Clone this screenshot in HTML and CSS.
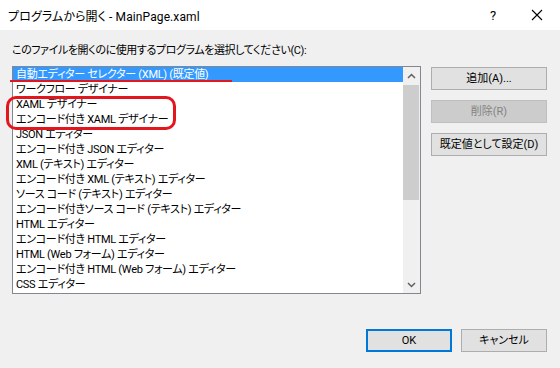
FILE: index.html
```html
<!DOCTYPE html>
<html lang="ja">
<head>
  <meta charset="UTF-8">
  <title>プログラムから開く</title>
  <link rel="stylesheet" href="styles.css">
</head>
<body>

  <div class="dialog">

    <!-- タイトルバー -->
    <div class="title-bar">
      <div class="title-text">プログラムから開く - MainPage.xaml</div>
      <div class="title-help">?</div>
      <div class="title-close">
        <svg width="12" height="12" viewBox="0 0 12 12">
          <path d="M1 1 L11 11 M11 1 L1 11" stroke="#000" stroke-width="1.1" fill="none"/>
        </svg>
      </div>
    </div>

    <div class="dialog-body">
      <div class="prompt">このファイルを開くのに使用するプログラムを選択してください(C):</div>

      <div class="main-row">
        <div class="list-box">
          <div class="list-items">
            <div class="list-item selected">自動エディター セレクター (XML) (既定値)</div>
            <div class="list-item">ワークフロー デザイナー</div>
            <div class="list-item">XAML デザイナー</div>
            <div class="list-item">エンコード付き XAML デザイナー</div>
            <div class="list-item">JSON エディター</div>
            <div class="list-item">エンコード付き JSON エディター</div>
            <div class="list-item">XML (テキスト) エディター</div>
            <div class="list-item">エンコード付き XML (テキスト) エディター</div>
            <div class="list-item">ソース コード (テキスト) エディター</div>
            <div class="list-item">エンコード付きソース コード (テキスト) エディター</div>
            <div class="list-item">HTML エディター</div>
            <div class="list-item">エンコード付き HTML エディター</div>
            <div class="list-item">HTML (Web フォーム) エディター</div>
            <div class="list-item">エンコード付き HTML (Web フォーム) エディター</div>
            <div class="list-item">CSS エディター</div>
          </div>
          <div class="scrollbar">
            <div class="scroll-arrow">
              <svg width="9" height="6" viewBox="0 0 9 6">
                <path d="M1 5 L4.5 1.5 L8 5" stroke="#606060" stroke-width="1.5" fill="none"/>
              </svg>
            </div>
            <div class="scroll-track">
              <div class="scroll-thumb"></div>
            </div>
            <div class="scroll-arrow">
              <svg width="9" height="6" viewBox="0 0 9 6">
                <path d="M1 1 L4.5 4.5 L8 1" stroke="#606060" stroke-width="1.5" fill="none"/>
              </svg>
            </div>
          </div>
        </div>

        <div class="side-buttons">
          <div class="btn">追加(A)...</div>
          <div class="btn disabled">削除(R)</div>
          <div class="btn">既定値として設定(D)</div>
        </div>
      </div>

      <div class="footer">
        <div class="btn btn-footer default">OK</div>
        <div class="btn btn-footer">キャンセル</div>
      </div>
    </div>

    <!-- 赤い注釈 -->
    <div class="mark-line"></div>
    <div class="mark-box"></div>
  </div>

</body>
</html>
```

FILE: styles.css
```css
body {
  margin: 0;
  background: #f0f0f0;
  font-family: 'Roboto', 'Noto Sans CJK JP', sans-serif;
  font-size: 11px;
  font-feature-settings: "palt";
  color: #000;
}

.dialog {
  position: relative;
  width: 560px;
  height: 368px;
  overflow: hidden;
}

.title-bar {
  display: flex;
  align-items: center;
  height: 30px;
  background: #fff;
  padding-left: 8px;
}

.title-text {
  flex: 1;
  font-size: 12px;
  letter-spacing: 0.1px;
}

.title-help {
  width: 46px;
  text-align: center;
  font-size: 13px;
  margin-right: -2px;
}

.title-close {
  width: 46px;
  display: flex;
  justify-content: center;
  align-items: center;
}

.dialog-body {
  padding: 0 13px 0 12px;
}

.prompt {
  height: 15px;
  line-height: 15px;
  margin-top: 13px;
  margin-bottom: 8px;
  letter-spacing: -0.4px;
}

.main-row {
  display: flex;
  align-items: flex-start;
}

.list-box {
  display: flex;
  width: 409px;
  height: 226px;
  border: 1px solid #828790;
  background: #fff;
}

.list-items {
  flex: 1;
}

.list-item {
  height: 15px;
  line-height: 15px;
  padding-left: 3px;
  white-space: nowrap;
  letter-spacing: -0.3px;
}

.list-item.selected {
  background: #3399ff;
  color: #fff;
}

.scrollbar {
  width: 17px;
  display: flex;
  flex-direction: column;
  background: #f0f0f0;
}

.scroll-arrow {
  height: 17px;
  display: flex;
  justify-content: center;
  align-items: center;
}

.scroll-track {
  flex: 1;
  padding: 1px 1px 0 0;
}

.scroll-thumb {
  height: 115px;
  background: #cdcdcd;
}

.side-buttons {
  display: flex;
  flex-direction: column;
  gap: 10px;
  margin-left: 10px;
  margin-top: 1px;
}

.btn {
  width: 114px;
  height: 21px;
  line-height: 21px;
  border: 1px solid #adadad;
  background: #e1e1e1;
  text-align: center;
}

.btn.disabled {
  color: #838383;
  background: #cccccc;
  border-color: #bfbfbf;
}

.footer {
  display: flex;
  justify-content: flex-end;
  gap: 9px;
  margin-top: 35px;
}

.btn-footer {
  width: 84px;
}

.btn-footer.default {
  width: 82px;
  height: 19px;
  line-height: 19px;
  border: 2px solid #0078d7;
}

.mark-line {
  position: absolute;
  left: 10px;
  top: 80px;
  width: 222px;
  height: 2px;
  background: #e3161e;
}

.mark-box {
  position: absolute;
  left: 6px;
  top: 96px;
  width: 164px;
  height: 28px;
  border: 3px solid #e3161e;
  border-radius: 10px;
}
```
